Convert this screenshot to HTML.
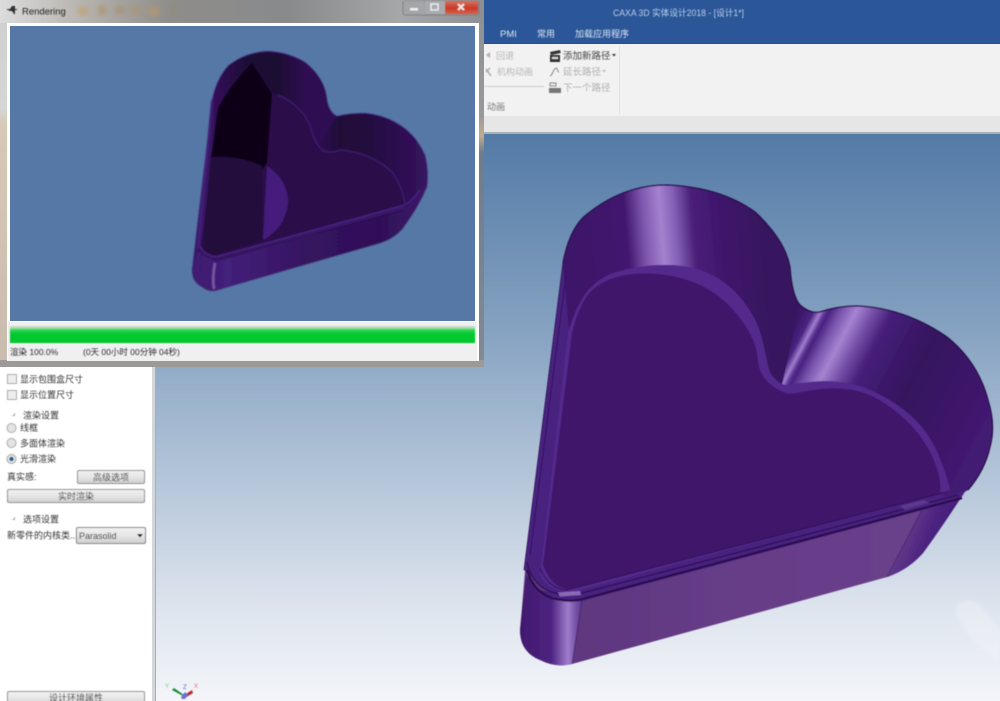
<!DOCTYPE html>
<html lang="zh">
<head>
<meta charset="utf-8">
<title>CAXA 3D 实体设计2018</title>
<style>
html,body{margin:0;padding:0;background:#fff;width:1000px;height:701px;overflow:hidden}
svg{display:block}
text{font-family:"Liberation Sans","Noto Sans CJK SC",sans-serif}
</style>
</head>
<body>
<svg width="1000" height="701" viewBox="0 0 1000 701" xmlns="http://www.w3.org/2000/svg">
<defs>
<linearGradient id="vp" x1="0" y1="0" x2="0" y2="1">
<stop offset="0" stop-color="#537aa6"/><stop offset=".3" stop-color="#7e9cbd"/><stop offset=".62" stop-color="#b6c7da"/><stop offset=".85" stop-color="#e0e6ef"/><stop offset="1" stop-color="#f3f5f9"/>
</linearGradient>
<linearGradient id="wall1" gradientUnits="userSpaceOnUse" x1="585" y1="240" x2="760" y2="225">
<stop offset="0" stop-color="#3e176b"/><stop offset=".24" stop-color="#42196f"/><stop offset=".34" stop-color="#7c56ad"/><stop offset=".44" stop-color="#a582cf"/><stop offset=".52" stop-color="#8460b6"/><stop offset=".62" stop-color="#4a2079"/><stop offset=".78" stop-color="#3e166c"/><stop offset="1" stop-color="#38135f"/>
</linearGradient>
<linearGradient id="wall2" gradientUnits="userSpaceOnUse" x1="785" y1="345" x2="975" y2="445">
<stop offset="0" stop-color="#3e176c"/><stop offset=".045" stop-color="#4a2380"/><stop offset=".075" stop-color="#a07ece"/><stop offset=".095" stop-color="#5b3392"/><stop offset=".11" stop-color="#4a2280"/><stop offset=".16" stop-color="#7a55ad"/><stop offset=".22" stop-color="#a684d1"/><stop offset=".29" stop-color="#7650a8"/><stop offset=".37" stop-color="#46207a"/><stop offset=".6" stop-color="#35125d"/><stop offset=".85" stop-color="#3c166a"/><stop offset="1" stop-color="#431a72"/>
</linearGradient>
<linearGradient id="front" gradientUnits="userSpaceOnUse" x1="580" y1="0" x2="890" y2="0">
<stop offset="0" stop-color="#5e3780"/><stop offset=".5" stop-color="#673d88"/><stop offset="1" stop-color="#693f8a"/>
</linearGradient>
<linearGradient id="cyl" gradientUnits="userSpaceOnUse" x1="520" y1="0" x2="583" y2="0">
<stop offset="0" stop-color="#42186f"/><stop offset=".5" stop-color="#4c2480"/><stop offset=".76" stop-color="#a07ccb"/><stop offset=".88" stop-color="#7853a8"/><stop offset="1" stop-color="#55308a"/>
</linearGradient>
<linearGradient id="cyl2" gradientUnits="userSpaceOnUse" x1="885" y1="560" x2="960" y2="590">
<stop offset="0" stop-color="#6a428e"/><stop offset=".4" stop-color="#4b2280"/><stop offset="1" stop-color="#3a1468"/>
</linearGradient>
<linearGradient id="tb" x1="0" y1="0" x2="1" y2="0">
<stop offset="0" stop-color="#dcdcdc"/><stop offset=".14" stop-color="#bdbab5"/><stop offset=".35" stop-color="#8f8d8a"/><stop offset=".6" stop-color="#888a8c"/><stop offset=".83" stop-color="#a5a7a9"/><stop offset="1" stop-color="#8c9094"/>
</linearGradient>
<linearGradient id="frameL" x1="0" y1="0" x2="0" y2="1">
<stop offset="0" stop-color="#d0d0d0"/><stop offset=".25" stop-color="#d6d6d6"/><stop offset=".3" stop-color="#d8c8b6"/><stop offset="1" stop-color="#c9bcae"/>
</linearGradient>
<linearGradient id="frameR" x1="0" y1="0" x2="0" y2="1">
<stop offset="0" stop-color="#8f9296"/><stop offset=".27" stop-color="#97989a"/><stop offset=".33" stop-color="#c0a98f"/><stop offset=".38" stop-color="#6d7c8e"/><stop offset="1" stop-color="#848a92"/>
</linearGradient>
<linearGradient id="close" x1="0" y1="0" x2="0" y2="1">
<stop offset="0" stop-color="#d9705f"/><stop offset=".55" stop-color="#c83a28"/><stop offset="1" stop-color="#d8614a"/>
</linearGradient>
<linearGradient id="green" x1="0" y1="0" x2="0" y2="1">
<stop offset="0" stop-color="#c6e8c8"/><stop offset=".2" stop-color="#30d24f"/><stop offset=".45" stop-color="#00cb2f"/><stop offset="1" stop-color="#00c62c"/>
</linearGradient>
<linearGradient id="btn" x1="0" y1="0" x2="0" y2="1">
<stop offset="0" stop-color="#f2f2f2"/><stop offset=".5" stop-color="#e6e6e6"/><stop offset="1" stop-color="#cfcfcf"/>
</linearGradient>
<linearGradient id="swall" gradientUnits="userSpaceOnUse" x1="212" y1="0" x2="330" y2="0">
<stop offset="0" stop-color="#35125c"/><stop offset=".3" stop-color="#1c0735"/><stop offset=".55" stop-color="#1c0733"/><stop offset=".8" stop-color="#2f0f52"/><stop offset="1" stop-color="#2f0f52"/>
</linearGradient>
<linearGradient id="swall2" gradientUnits="userSpaceOnUse" x1="315" y1="0" x2="427" y2="0">
<stop offset="0" stop-color="#2f0f52"/><stop offset=".22" stop-color="#1f0938"/><stop offset=".45" stop-color="#220a3e"/><stop offset="1" stop-color="#36135f"/>
</linearGradient>
<linearGradient id="sfront" gradientUnits="userSpaceOnUse" x1="192" y1="0" x2="427" y2="0">
<stop offset="0" stop-color="#3e1a70"/><stop offset=".15" stop-color="#42207a"/><stop offset=".5" stop-color="#35125f"/><stop offset=".8" stop-color="#2f1057"/><stop offset="1" stop-color="#3c1769"/>
</linearGradient>
<filter id="b1" x="-5%" y="-5%" width="110%" height="110%"><feGaussianBlur stdDeviation=".4"/></filter>
<filter id="b2" x="-5%" y="-5%" width="110%" height="110%"><feGaussianBlur stdDeviation=".7"/></filter>
<filter id="b3" x="-20%" y="-20%" width="140%" height="140%"><feGaussianBlur stdDeviation="2"/></filter>
</defs>

<!-- viewport -->
<rect x="156" y="133" width="844" height="568" fill="url(#vp)"/>
<path d="M957 605q14-10 25 2 12 14 18 24v32q-22-14-38-38-8-12-5-20z" fill="#f2f5f9" opacity=".4" filter="url(#b3)"/>

<!-- top bar -->
<rect x="484" y="0" width="516" height="44" fill="#2b5698"/>
<rect x="484" y="43" width="516" height="1" fill="#24508f"/>
<rect x="484" y="44" width="516" height="72" fill="#f2f2f2"/>
<rect x="484" y="116" width="516" height="17" fill="#e6e6e6"/>
<rect x="484" y="132" width="516" height="2" fill="#a9b0b8"/>
<rect x="619" y="46" width="1" height="68" fill="#e2e2e2"/>
<g filter="url(#b1)">
<text x="613" y="16" font-size="9" textLength="131" lengthAdjust="spacingAndGlyphs" fill="#bcd0ea">CAXA 3D 实体设计2018 - [设计1*]</text>
<text x="500" y="37" font-size="9.500" fill="#dbe6f5">PMI</text>
<text x="537" y="37" font-size="9" fill="#dbe6f5">常用</text>
<text x="575" y="37" font-size="9" fill="#dbe6f5">加载应用程序</text>
<text x="496" y="59" font-size="9" fill="#b6b6b6">回退</text>
<text x="497" y="75" font-size="9" fill="#b6b6b6">机构动画</text>
<text x="563" y="59" font-size="9.500" fill="#444">添加新路径</text>
<text x="563" y="75" font-size="9.500" fill="#b0b0b0">延长路径</text>
<text x="563" y="91" font-size="9.500" fill="#b0b0b0">下一个路径</text>
<text x="487" y="110" font-size="9" fill="#777">动画</text>
<path d="M612 54l4 0-2 2.500z" fill="#333"/>
<path d="M602 70l4 0-2 2.500z" fill="#bbb"/>
<path d="M490 52l-4 3 4 3z" fill="#b0b0b0"/>
<path d="M486 69l5 7M490 68l-4 4" stroke="#aaa" stroke-width="1.500" fill="none"/>
<rect x="484" y="86" width="60" height="1" fill="#c9c9c9"/>
<path d="M550 52l10-2 .8 3-10 2zM550 55h10v7h-10z" fill="#333"/>
<rect x="552" y="57" width="6" height="2" fill="#d8d8d8"/>
<path d="M550 76c3-1 3-7 6-8 2 0 1 4 3 4" fill="none" stroke="#888" stroke-width="1"/>
<path d="M550 83h6v3h-6z" fill="none" stroke="#888"/>
<path d="M549 88h12v5h-12z" fill="#777"/>
</g>

<!-- left panel -->
<rect x="0" y="360" width="152" height="341" fill="#fff"/>
<rect x="152" y="360" width="4" height="341" fill="#d4d7da"/>
<rect x="155" y="360" width="1" height="341" fill="#a9adb2"/>
<g filter="url(#b1)">
<rect x="7.500" y="374.500" width="9" height="9" fill="#eee" stroke="#a8a8a8"/>
<rect x="7.500" y="390.500" width="9" height="9" fill="#eee" stroke="#a8a8a8"/>
<text x="20" y="382.500" font-size="9" fill="#333">显示包围盒尺寸</text>
<text x="20" y="398" font-size="9" fill="#333">显示位置尺寸</text>
<path d="M15 413l-3 3h3z" fill="#aaa"/>
<text x="23" y="418.500" font-size="9" fill="#333">渲染设置</text>
<circle cx="11.500" cy="428" r="4.500" fill="#e4e4e4" stroke="#a8a8a8"/>
<circle cx="11.500" cy="443" r="4.500" fill="#e4e4e4" stroke="#a8a8a8"/>
<circle cx="11.500" cy="459" r="4.500" fill="#e8e8e8" stroke="#a0a0a0"/>
<circle cx="11.500" cy="459" r="2.300" fill="#1f6296"/>
<text x="20" y="431" font-size="9" fill="#333">线框</text>
<text x="20" y="446.500" font-size="9" fill="#333">多面体渲染</text>
<text x="20" y="462" font-size="9" fill="#333">光滑渲染</text>
<text x="7" y="480" font-size="9" fill="#333">真实感:</text>
<rect x="77.500" y="470.500" width="67" height="13" rx="1.500" fill="url(#btn)" stroke="#8e8e8e"/>
<text x="93" y="480.500" font-size="9" fill="#2a2a2a">高级选项</text>
<rect x="7.500" y="489.500" width="137" height="13" rx="1.500" fill="url(#btn)" stroke="#8e8e8e"/>
<text x="58" y="499.500" font-size="9" fill="#2a2a2a">实时渲染</text>
<path d="M15 517l-3 3h3z" fill="#aaa"/>
<text x="23" y="522.500" font-size="9" fill="#333">选项设置</text>
<text x="7" y="538.500" font-size="9" fill="#333">新零件的内核类...</text>
<rect x="76.500" y="527.500" width="69" height="16" rx="1.500" fill="url(#btn)" stroke="#808080"/>
<text x="79" y="539" font-size="9" fill="#1c1c1c">Parasolid</text>
<path d="M137 534h6l-3 3.500z" fill="#111"/>
<rect x="7.500" y="691.500" width="137" height="14" rx="1.500" fill="url(#btn)" stroke="#8e8e8e"/>
<text x="49" y="701" font-size="9" fill="#2a2a2a">设计环境属性</text>
<!-- axes -->
<path d="M183 696l-11-6 2-2 10 7z" fill="#1d8a3a"/>
<path d="M183 696l9-6 1 3-8 5z" fill="#b52a34"/>
<path d="M181 697l4-5 3 3-3 4h-3z" fill="#6a70d0"/>
<text x="165" y="688" font-size="6" fill="#6fd27d">Y</text>
<text x="183" y="689" font-size="6" fill="#5a5fd0">Z</text>
<text x="194" y="688" font-size="6" fill="#e0707a">X</text>
</g>

<!-- big heart -->
<g filter="url(#b1)">
<!-- front & right lower body -->
<path d="M526 560L520 630Q520 652 540 660Q556 668 572 664L887 577Q908 570 923 553Q940 530 968 487L960 470L540 570z" fill="url(#front)"/>
<path d="M887 577Q908 570 923 553Q940 530 968 487L960 480L922 508z" fill="url(#cyl2)"/>
<path d="M526 575L520 630Q520 652 540 660Q556 668 572 664L582 600L540 590z" fill="url(#cyl)"/>
<path d="M582 600L572 664" stroke="#3a1a5c" stroke-width=".6" fill="none"/>
<path d="M922 510L887 577" stroke="#3f2066" stroke-width=".6" fill="none"/>
<!-- full top silhouette -->
<path d="M563 263Q570 225 590 212Q625 185 667 185Q720 187 755 212Q785 240 790 267Q792 296 800 305Q810 314 820 312Q838 306 857 306Q905 308 947 337Q978 362 988 400Q996 425 990 447Q985 470 968 490L942 505L582 601Q560 604 548 592L524 570Z" fill="#4a2280"/>
<!-- walls -->
<path d="M563 263Q570 225 590 212Q625 185 667 185Q720 187 755 212Q785 240 790 267Q792 296 800 305L782 385L700 310L570 345Z" fill="url(#wall1)"/>
<path d="M800 305Q810 314 820 312Q838 306 857 306Q905 308 947 337Q978 362 988 400Q996 425 990 447Q985 470 968 490L945 497L860 400L782 385Z" fill="url(#wall2)"/>
<!-- ledge -->
<path d="M568 333Q577 303 588.500 290Q600 277 616.500 272Q633 267 650 265.500Q667 264 683.500 266Q700 268 716.500 277.500Q733 287 745 303.500Q757 320 761 335Q765 350 767.500 363.500Q770 377 778.500 382Q787 387 792 385Q797 383 815 381.500Q833 380 850 383.500Q867 387 887 398.500Q907 410 920 425Q933 440 940.500 460Q948 480 950 490L580 590Q550 596 540 575Z" fill="#52298c"/>
<!-- floor -->
<path d="M572 333Q580 300 593.500 289Q607 278 625 275Q643 272 663 274.500Q683 277 700 285Q717 293 730 306.500Q743 320 750 333.500Q757 347 757.500 357Q758 367 762.500 375Q767 383 777 389Q787 395 793.500 393.500Q800 392 816.500 389.500Q833 387 850 389.500Q867 392 883.500 402.500Q900 413 913.500 428Q927 443 934.500 461.500Q942 480 940 493L568 589Q552 588 543 565Z" fill="#3f156b"/>
<!-- rim lines -->
<path d="M540 568Q548 588 566 590L942 493" fill="none" stroke="#2c0d50" stroke-width="1"/>
<path d="M527 562Q533 590 560 594Q572 596 586 592L958 495" fill="none" stroke="#2a0c4d" stroke-width="1.200"/>
<path d="M527 570Q535 597 562 600Q575 602 586 598L962 498" fill="none" stroke="#2a0a4c" stroke-width="2.200"/>
<path d="M558 592.500L580 591L581 595L560 596.500Z" fill="#9a77c6" opacity=".85"/>
<path d="M900 506L924 500L930 503L905 510Z" fill="#6a4298" opacity=".7"/>
<path d="M563 263L524 570M566 275L530 555" fill="none" stroke="#2a0c4e" stroke-width=".8"/>
<path d="M563 263Q570 225 590 212Q625 185 667 185Q720 187 755 212Q785 240 790 267Q792 296 800 305Q810 314 820 312Q838 306 857 306Q905 308 947 337Q978 362 988 400Q996 425 990 447Q985 470 968 490" fill="none" stroke="#26094a" stroke-width="1.200"/>
</g>

<!-- rendering window -->
<path d="M4 0H480Q484 0 484 4V363Q484 367 480 367H4Q0 367 0 363V4Q0 0 4 0Z" fill="#a8a9aa"/>
<rect x="0" y="22" width="7" height="345" fill="url(#frameL)"/>
<rect x="478" y="22" width="6" height="345" fill="url(#frameR)"/>
<rect x="0" y="360" width="484" height="7" fill="#9c9a98"/>
<rect x="0" y="0" width="484" height="23" fill="url(#tb)"/>
<g filter="url(#b3)" opacity=".45">
<rect x="78" y="7" width="10" height="8" fill="#c79a4d"/><rect x="98" y="5" width="8" height="10" fill="#b08a50"/><rect x="115" y="6" width="10" height="8" fill="#a98a5c"/><rect x="131" y="6" width="10" height="8" fill="#b1935f"/><rect x="149" y="7" width="10" height="9" fill="#c79a55"/><rect x="170" y="7" width="7" height="7" fill="#99876a"/>
</g>
<rect x="7" y="23" width="472" height="338" fill="#fff"/>
<rect x="10" y="26" width="465" height="295" fill="#5578a6"/>
<rect x="8" y="322" width="469" height="39" fill="#f0f0f0"/>
<g filter="url(#b1)">
<rect x="403" y="1" width="76" height="14" rx="2" fill="none" stroke="#777" stroke-width=".8"/>
<rect x="404" y="1" width="20" height="13" fill="#a3a5a8"/>
<rect x="425" y="1" width="20" height="13" fill="#a8aaad"/>
<rect x="445" y="1" width="33" height="13" fill="url(#close)"/>
<rect x="410" y="8" width="8" height="2.500" fill="#eee"/>
<rect x="431" y="4" width="7" height="6" fill="none" stroke="#eee" stroke-width="1.400"/>
<path d="M458 4l6 6M464 4l-6 6" stroke="#f4e6e2" stroke-width="2"/>
<path d="M7 9h3l2-3h3v3h2v1h-2v4h-1l-2-3h-2l-1 0v-1H7z" fill="#333"/>
<text x="22" y="14.500" font-size="9.500" fill="#222">Rendering</text>
</g>
<g filter="url(#b1)">
<rect x="10" y="326" width="465" height="1" fill="#cfd4d0"/>
<rect x="10" y="327" width="465" height="16" fill="url(#green)"/>
<text x="10" y="355" font-size="8.500" fill="#2c2c2c">渲染 100.0%</text>
<text x="83" y="355" font-size="8.500" fill="#2c2c2c">(0天 00小时 00分钟 04秒)</text>
</g>

<!-- small heart -->
<g filter="url(#b2)">
<path d="M212 100L192 270Q192 282 202 287Q210 293 218 290L380 243Q395 238 403 228Q418 208 427 187Q429 170 425 155Q416 135 400 125Q385 115 365 113Q350 113 337 116Q329 112 327 100Q325 78 305 62Q288 52 268 51Q245 52 228 66Q216 80 212 100Z" fill="#3a1469"/>
<path d="M216 262L408 208Q420 198 427 180Q426 195 403 228Q395 238 380 243L216 290Q204 290 197 283Q192 277 192 268L198 250Z" fill="url(#sfront)"/>
<path d="M199 279L213 100Q216 80 228 66Q245 53 268 52Q288 53 305 63Q325 78 327 100Q329 112 336 117L318 145L322 148L290 136L272 125L216 130Z" fill="url(#swall)"/>
<path d="M336 117Q350 113 365 114Q385 116 400 126Q416 136 424 155Q428 170 426 186L406 208L400 198Q388 176 365 162L330 152L315 150Z" fill="url(#swall2)"/>
<!-- floor -->
<path d="M216 132L272 96L272 92Q300 104 310 125Q313 140 322 150Q330 154 340 150Q370 152 392 172Q403 188 405 205L217 256Q202 254 201 246Z" fill="#2b0c49"/>
<!-- black shadow -->
<path d="M211 157L218 108Q230 85 252 63L272 94L267 163L262 170Q240 155 211 157Z" fill="#100119"/>
<path d="M211 157Q240 155 262 166L263 240L216 255Q204 252 203 245Z" fill="#210a3c"/>
<path d="M267 166Q288 180 288 203Q285 228 263 240Z" fill="#451a7c"/>
<!-- lines -->
<path d="M278 95Q300 104 310 125Q313 140 322 150Q330 154 340 150Q370 152 392 172Q403 188 405 205" fill="none" stroke="#43207a" stroke-width="1"/>
<path d="M200 246Q205 256 216 257L405 205Q413 200 420 190" fill="none" stroke="#4c2786" stroke-width="1.200"/>
<path d="M198 250Q204 258 218 259L405 210" fill="none" stroke="#241040" stroke-width=".8"/>
<path d="M212 100L198 248" fill="none" stroke="#45207a" stroke-width="2"/>
<path d="M215 263Q212 278 214 289" fill="none" stroke="#7858a0" stroke-width="2.500"/>
</g>
</svg>
</body>
</html>
